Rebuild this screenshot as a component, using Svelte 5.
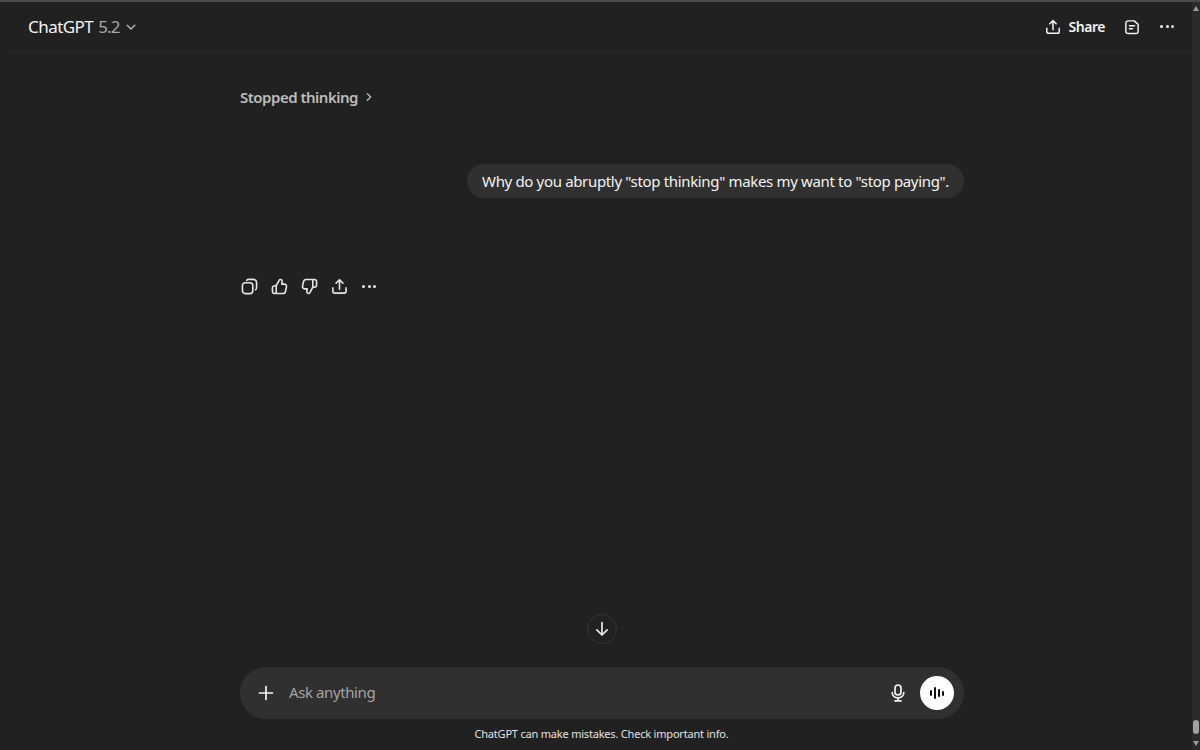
<script>
	let actions = ['copy', 'up', 'down', 'share', 'more'];
</script>

<div class="window">
	<div class="top-strip"></div>
	<div class="body">
		<div class="main">
			<header class="header">
				<div class="model">
					<span class="name">ChatGPT</span>
					<span class="version">5.2</span>
					<svg class="chev" width="12" height="12" viewBox="0 0 12 12"><path d="M1.500 4l4.500 4.500L10.500 4" /></svg>
				</div>
				<div class="header-actions">
					<div class="share">
						<svg width="16" height="16" viewBox="0 0 18 18"><path d="M9 12V2.200M5.400 5.400L9 1.800l3.600 3.600M2 10.500V14c0 1.200.8 2 2 2h10c1.200 0 2-.8 2-2v-3.500" /></svg>
						<span>Share</span>
					</div>
					<svg class="note" width="14" height="16" viewBox="0 0 16 18"><path d="M4 2h6.500L15 6v8.500c0 1.200-.9 2-2 2H3.500c-1.400 0-2.500-1-2.500-2.500V5c0-1.800 1.200-3 3-3z" /><path d="M5 7.500h6M5 11h3.500" /></svg>
					<div class="dots"><i></i><i></i><i></i></div>
				</div>
			</header>

			<div class="thread">
				<div class="column">
					<div class="thinking">
						<span>Stopped thinking</span>
						<svg width="8" height="8" viewBox="0 0 10 10"><path d="M3 1l4 4-4 4" /></svg>
					</div>
					<div class="bubble-row">
						<div class="bubble">Why do you abruptly "stop thinking" makes my want to "stop paying".</div>
					</div>
					<div class="msg-actions">
						{#each actions as a}
							<div class="act">
								{#if a === 'copy'}
									<svg width="17" height="17" viewBox="0 0 18 18"><rect x="1.500" y="5" width="11" height="11.500" rx="3" /><path d="M6 2.500c.5-.7 1.200-1 2-1h5c2 0 3.500 1.500 3.500 3.500v5c0 1-.4 1.800-1 2.400" /></svg>
								{:else if a === 'up'}
									<svg width="17" height="17" viewBox="0 0 18 18"><path d="M5.500 8.200L8.600 2.500c.3-.6.800-.9 1.400-.9 1.100 0 1.900.9 1.800 2L11.400 6.500h2.800c1.500 0 2.500 1.300 2.200 2.700l-1 4.800c-.3 1.400-1.400 2.400-2.900 2.400H4c-1.500 0-2.500-1-2.500-2.400v-3.500c0-1.400 1-2.300 2.500-2.300h1.500v8" /></svg>
								{:else if a === 'down'}
									<svg width="17" height="17" viewBox="0 0 18 18"><path d="M12.500 9.800L9.400 15.500c-.3.600-.8.900-1.400.9-1.100 0-1.900-.9-1.800-2l.4-2.900H3.800c-1.500 0-2.500-1.300-2.200-2.700l1-4.800C2.900 2.600 4 1.600 5.500 1.600H14c1.500 0 2.500 1 2.500 2.400v3.500c0 1.400-1 2.300-2.500 2.300h-1.500v-8" /></svg>
								{:else if a === 'share'}
									<svg width="17" height="17" viewBox="0 0 18 18"><path d="M9 12V2.200M5.400 5.400L9 1.800l3.600 3.600M2 10.500V14c0 1.200.8 2 2 2h10c1.200 0 2-.8 2-2v-3.500" /></svg>
								{:else}
									<div class="dots"><i></i><i></i><i></i></div>
								{/if}
							</div>
						{/each}
					</div>
				</div>
			</div>

			<div class="scroll-down">
				<svg width="16" height="16" viewBox="0 0 16 16"><path d="M8 1.500v12.500M2.800 8.800L8 14l5.200-5.200" /></svg>
			</div>

			<div class="composer">
				<svg class="plus" width="16" height="16" viewBox="0 0 16 16"><path d="M8 1.500v13M1.500 8h13" /></svg>
				<span class="placeholder">Ask anything</span>
				<svg class="mic" width="14" height="18" viewBox="0 0 14 18"><rect x="4" y="1" width="6" height="10" rx="3" /><path d="M1.200 8.500c0 3.200 2.500 5.300 5.800 5.300s5.800-2.100 5.800-5.300M7 14v2.800M4 16.800h6" /></svg>
				<div class="voice">
					<span style="height: 6px"></span>
					<span style="height: 12px"></span>
					<span style="height: 8px"></span>
					<span style="height: 5px"></span>
				</div>
			</div>
			<p class="disclaimer">ChatGPT can make mistakes. Check important info.</p>
		</div>

		<div class="scrollbar">
			<div class="arrow-up"></div>
			<div class="thumb"></div>
			<div class="arrow-down"></div>
		</div>
	</div>
</div>

<style>
	:global(body) {
		background: #212121;
	}

	.window {
		width: 1200px;
		height: 750px;
		display: flex;
		flex-direction: column;
		overflow: hidden;
		background: #212121;
		color: #f3f3f3;
		font-family: "Noto Sans", "Open Sans", sans-serif;
	}

	.top-strip {
		height: 2px;
		background: #4a4a4a;
	}

	.body {
		flex: 1;
		display: flex;
		min-height: 0;
	}

	.main {
		flex: 1;
		display: flex;
		flex-direction: column;
		min-width: 0;
	}

	svg {
		fill: none;
		stroke: currentColor;
		stroke-width: 1.700;
		stroke-linecap: round;
		stroke-linejoin: round;
		flex: none;
	}

	.header {
		height: 49px;
		margin-left: 10px;
		padding: 0 18px 0 18px;
		display: flex;
		align-items: center;
		justify-content: space-between;
		border-bottom: 1px solid #2a2a2a;
	}

	.model {
		display: flex;
		align-items: center;
		font-size: 17px;
		letter-spacing: -0.55px;
	}

	.version {
		color: #a8a8a8;
		margin-left: 5px;
		letter-spacing: -0.8px;
	}

	.chev {
		width: 10px;
		color: #b4b4b4;
		margin-left: 6px;
	}

	.header-actions {
		display: flex;
		align-items: center;
	}

	.share {
		display: flex;
		align-items: center;
		gap: 7px;
		font-size: 14px;
		font-weight: 600;
		letter-spacing: -0.45px;
	}

	.note {
		margin-left: 20px;
	}

	.dots {
		display: flex;
		gap: 2.500px;
	}

	.header-actions .dots {
		margin-left: 21px;
	}

	.dots i {
		width: 3px;
		height: 3px;
		border-radius: 50%;
		background: #ececec;
	}

	.thread {
		flex: 1;
		min-height: 0;
	}

	.column {
		width: 724px;
		margin-left: 240px;
	}

	.thinking {
		margin-top: 33px;
		height: 24px;
		display: flex;
		align-items: center;
		gap: 7px;
		font-size: 15px;
		font-weight: 600;
		letter-spacing: -0.5px;
		color: #bcbcbc;
	}

	.bubble-row {
		margin-top: 55px;
		display: flex;
		justify-content: flex-end;
	}

	.bubble {
		height: 34px;
		padding: 0 15px;
		display: flex;
		align-items: center;
		border-radius: 17px;
		background: #303030;
		font-size: 15px;
		letter-spacing: -0.34px;
		white-space: nowrap;
	}

	.msg-actions {
		margin-top: 72px;
		margin-left: -6px;
		display: flex;
		align-items: center;
	}

	.act {
		width: 30px;
		height: 32px;
		display: flex;
		align-items: center;
		justify-content: center;
		color: #e4e4e4;
	}

	.scroll-down {
		width: 30px;
		height: 30px;
		margin: 0 0 23px 587px;
		display: flex;
		align-items: center;
		justify-content: center;
		border: 1px solid #363636;
		border-radius: 50%;
		box-sizing: border-box;
		color: #e8e8e8;
	}

	.composer {
		width: 724px;
		height: 52px;
		margin-left: 240px;
		padding: 0 10px 0 18px;
		box-sizing: border-box;
		display: flex;
		align-items: center;
		border-radius: 26px;
		background: #303030;
	}

	.placeholder {
		flex: 1;
		margin-left: 15px;
		margin-bottom: 2px;
		font-size: 15px;
		letter-spacing: -0.4px;
		color: #a4a4a4;
	}

	.mic {
		margin-right: 15px;
	}

	.voice {
		width: 34px;
		height: 34px;
		display: flex;
		align-items: center;
		justify-content: center;
		gap: 2px;
		border-radius: 50%;
		background: #fff;
	}

	.voice span {
		width: 2px;
		border-radius: 1px;
		background: #111;
	}

	.disclaimer {
		margin: 0;
		height: 31px;
		line-height: 29px;
		text-align: center;
		padding-left: 11px;
		font-size: 11px;
		letter-spacing: -0.2px;
		color: #e2e2e2;
	}

	.scrollbar {
		width: 8px;
		background: #2a2a2a;
		display: flex;
		flex-direction: column;
		align-items: center;
	}

	.arrow-up,
	.arrow-down {
		width: 0;
		height: 0;
		border-left: 3px solid transparent;
		border-right: 3px solid transparent;
	}

	.arrow-up {
		margin-top: 4px;
		border-bottom: 5px solid #9a9a9a;
	}

	.thumb {
		width: 6px;
		height: 14px;
		margin-top: auto;
		border-radius: 3px;
		background: #a0a0a0;
	}

	.arrow-down {
		margin: 7px 0 4px;
		border-top: 5px solid #9a9a9a;
	}
</style>
